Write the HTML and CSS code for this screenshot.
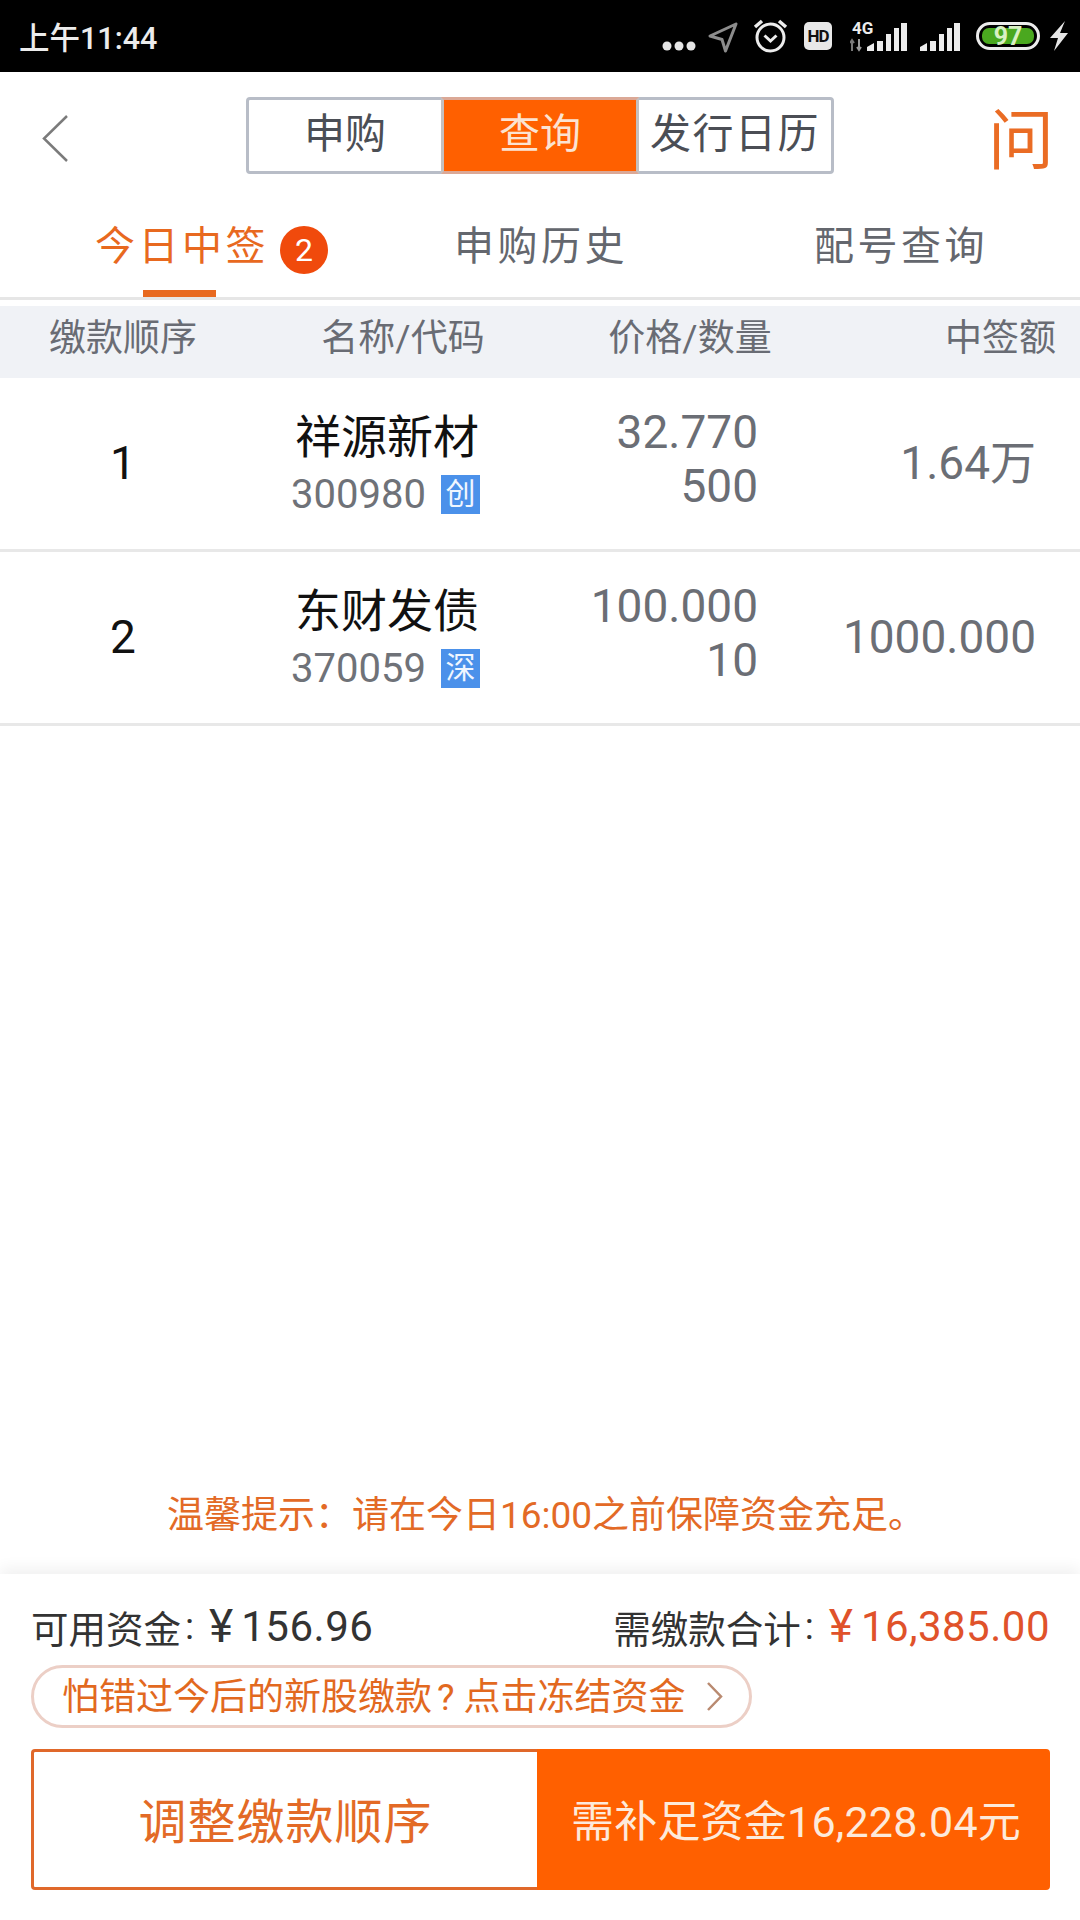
FILE: index.html
```html
<!DOCTYPE html>
<html lang="zh-CN">
<head>
  <meta charset="UTF-8">
  <meta name="viewport" content="width=device-width, initial-scale=1.0">
  <title>今日中签</title>
  <link rel="stylesheet" href="styles.css">
</head>
<body>
  <div class="page">
    <div class="status-bar">
      <span class="time">上午11:44</span>
      <div class="status-icons">
        <svg class="ic-dots" width="34" height="10" viewBox="0 0 34 10"><circle cx="5" cy="5" r="4.5" fill="#e6e6e6"/><circle cx="17" cy="5" r="4.5" fill="#e6e6e6"/><circle cx="29" cy="5" r="4.5" fill="#e6e6e6"/></svg>
        <svg class="ic-loc" width="30" height="31" viewBox="0 0 30 31"><path d="M28 2 L2 14 L14 17.5 L17.5 29 Z" fill="none" stroke="#8c8c8c" stroke-width="3" stroke-linejoin="round"/></svg>
        <svg class="ic-alarm" width="35" height="35" viewBox="0 0 35 35"><circle cx="17.5" cy="19.5" r="13.5" fill="none" stroke="#ececec" stroke-width="3"/><path d="M11.5 17.5 L17.5 23 L23.5 17.5" fill="none" stroke="#ececec" stroke-width="3"/><path d="M2 9 L9 3 M26 3 L33 9" stroke="#ececec" stroke-width="3.5"/></svg>
        <span class="ic-hd">HD</span>
        <svg class="ic-sig-4g" width="57" height="35" viewBox="0 -4 57 35">
          <text class="sig-label" x="2" y="13">4G</text>
          <path d="M2 30 V19 M0 22 L2 19 L4 22" stroke="#777" stroke-width="2" fill="none"/>
          <path d="M9 18 V29 M7 26 L9 29 L11 26" stroke="#999" stroke-width="2" fill="none"/>
          <path d="M17 30 V26 L24 22 V30 Z M27 20 H33 V30 H27 Z M36 13 H41 V30 H36 Z M44 7 H49 V30 H44 Z M51 2 H57 V30 H51 Z" fill="#ececec"/>
        </svg>
        <svg class="ic-sig" width="40" height="29" viewBox="0 0 40 29"><path d="M0 29 V25 L7 21 V29 Z M10 19 H16 V29 H10 Z M19 12 H24 V29 H19 Z M27 6 H32 V29 H27 Z M34 1 H40 V29 H34 Z" fill="#ececec"/></svg>
        <svg class="ic-batt" width="64" height="28" viewBox="0 0 64 28">
          <rect x="1.5" y="1.5" width="61" height="25" rx="12.5" fill="none" stroke="#ececec" stroke-width="3"/>
          <rect x="6" y="6" width="52" height="16" rx="7" fill="#4aa81f"/>
          <text class="batt-label" x="32" y="23" text-anchor="middle">97</text>
        </svg>
        <svg class="ic-bolt" width="18" height="30" viewBox="0 0 18 30"><path d="M15 0 L0 17 L8 17 L4 30 L18 12 L10 12 Z" fill="#e6e6e6"/></svg>
      </div>
    </div>

    <div class="nav">
      <svg class="back" width="28" height="47" viewBox="0 0 28 47"><path d="M25 1 L2 23.5 L25 46" fill="none" stroke="#7b7b7b" stroke-width="2.5"/></svg>
      <div class="segment">
        <div class="seg-item">申购</div>
        <div class="seg-item active">查询</div>
        <div class="seg-item">发行日历</div>
      </div>
      <div class="ask">问</div>
    </div>

    <div class="tabs">
      <div class="tab active">今日中签<span class="tab-badge">2</span></div>
      <div class="tab tab-history">申购历史</div>
      <div class="tab tab-lookup">配号查询</div>
    </div>

    <div class="table-head">
      <div class="th-order">缴款顺序</div>
      <div class="th-name">名称/代码</div>
      <div class="th-price">价格/数量</div>
      <div class="th-amount">中签额</div>
    </div>

    <div class="row">
      <div class="cell-order">1</div>
      <div class="cell-name">
        <div class="stock-name">祥源新材</div>
        <div class="stock-code">300980<span class="market">创</span></div>
      </div>
      <div class="cell-price">32.770<br>500</div>
      <div class="cell-amount">1.64万</div>
    </div>
    <div class="row">
      <div class="cell-order">2</div>
      <div class="cell-name">
        <div class="stock-name">东财发债</div>
        <div class="stock-code">370059<span class="market">深</span></div>
      </div>
      <div class="cell-price">100.000<br>10</div>
      <div class="cell-amount">1000.000</div>
    </div>

    <div class="spacer">
      <div class="tip">温馨提示：请在今日16:00之前保障资金充足。</div>
    </div>

    <div class="footer">
      <div class="funds">
        <div class="funds-item">可用资金<span class="colon">:</span><span class="yen">¥</span><span class="money">156.96</span></div>
        <div class="funds-item due">需缴款合计<span class="colon">:</span><span class="yen">¥</span><span class="money">16,385.00</span></div>
      </div>
      <div class="freeze">
        <span>怕错过今后的新股缴款<span class="qmark">?</span>点击冻结资金</span>
        <svg width="17" height="31" viewBox="0 0 17 31"><path d="M2 2 L15 15.5 L2 29" fill="none" stroke="#b98a70" stroke-width="2.5"/></svg>
      </div>
      <div class="actions">
        <div class="btn btn-order">调整缴款顺序</div>
        <div class="btn btn-pay">需补足资金16,228.04元</div>
      </div>
    </div>
  </div>
</body>
</html>
```
FILE: styles.css
```css
* {
  box-sizing: border-box;
}
body {
  margin: 0;
  background-color: #fff;
  font-family: Roboto, "Noto Sans CJK SC", sans-serif;
}
.page {
  width: 1080px;
  height: 1920px;
  display: flex;
  flex-direction: column;
}

/* status bar */
.status-bar {
  height: 72px;
  background-color: #000;
  display: flex;
  align-items: center;
  padding: 0 12px 0 19px;
  color: #ececec;
  flex-shrink: 0;
}
.time {
  font-size: 30.5px;
  font-weight: 500;
}
.status-icons {
  margin-left: auto;
  display: flex;
  align-items: center;
}
.ic-dots { margin-top: 20px; }
.ic-loc { margin-left: 12px; margin-top: 2px; }
.ic-alarm { margin-left: 15px; margin-top: -1px; }
.ic-hd {
  margin-left: 16px;
  width: 28px;
  height: 28px;
  background-color: #e8e8e8;
  border-radius: 5px;
  color: #111;
  font-size: 17px;
  font-weight: 700;
  line-height: 28px;
  text-align: center;
  letter-spacing: -1px;
}
.ic-sig-4g { margin-left: 18px; margin-top: -4px; }
.ic-sig { margin-left: 13px; }
.ic-batt { margin-left: 16px; }
.ic-bolt { margin-left: 10px; }
.sig-label {
  font-size: 17px;
  font-weight: 700;
  fill: #ececec;
}
.batt-label {
  font-size: 25px;
  font-weight: 700;
  fill: #d9f0c4;
}

/* top nav */
.nav {
  display: flex;
  align-items: center;
  padding: 25px 26px 0 42px;
  flex-shrink: 0;
}
.back {
  margin-top: 5px;
}
.segment {
  margin-left: 176px;
  width: 588px;
  height: 77px;
  display: flex;
  border: 3px solid #b8bdc7;
  border-radius: 4px;
}
.seg-item {
  flex: 1;
  text-align: center;
  font-size: 41px;
  line-height: 68px;
  color: #4b4e55;
}
.seg-item:last-child {
  white-space: nowrap;
  letter-spacing: 1.5px;
}
.seg-item.active {
  margin: -3px 0;
  height: 77px;
  line-height: 68px;
  background-color: #ff6000;
  border: 3px solid #dba896;
  border-left-color: #c4c0c0;
  border-right-color: #c4c0c0;
  color: #fbe3d2;
}
.ask {
  margin-left: auto;
  height: 77px;
  padding-top: 12px;
  font-size: 66px;
  line-height: 65px;
  color: #ea6c24;
}

/* tabs */
.tabs {
  height: 126px;
  padding-left: 95px;
  padding-top: 14px;
  display: flex;
  align-items: center;
  border-bottom: 3px solid #e6e6e6;
  font-size: 40px;
  letter-spacing: 3.5px;
  color: #64676e;
  flex-shrink: 0;
}
.tab {
  display: flex;
  align-items: center;
  position: relative;
  height: 100%;
}
.tab.active {
  color: #e8691f;
}
.tab.active::after {
  content: "";
  position: absolute;
  left: 48px;
  bottom: 0;
  width: 73px;
  height: 7px;
  background-color: #e8691f;
}
.tab-badge {
  width: 48px;
  height: 48px;
  margin-left: 11px;
  margin-top: 14px;
  border-radius: 50%;
  background-color: #f04a0c;
  color: #fff;
  font-size: 32px;
  letter-spacing: 0;
  line-height: 48px;
  text-align: center;
}
.tab-history { margin-left: 126px; }
.tab-lookup { margin-left: 186px; }

/* table */
.table-head {
  margin-top: 6px;
  height: 72px;
  padding-bottom: 14px;
  display: grid;
  grid-template-columns: 246px 314px 260px 1fr;
  align-items: center;
  background-color: #f0f2f6;
  font-size: 37px;
  color: #696c74;
  flex-shrink: 0;
}
.th-order, .th-name, .th-price {
  text-align: center;
}
.th-amount {
  text-align: right;
  padding-right: 24px;
}
.row {
  height: 174px;
  display: grid;
  grid-template-columns: 246px 284px 228px 1fr;
  align-items: center;
  border-bottom: 3px solid #e8e8e8;
  flex-shrink: 0;
}
.cell-order {
  text-align: center;
  padding-bottom: 2px;
  font-size: 46px;
  line-height: 54px;
  color: #111;
}
.cell-name {
  padding-left: 45px;
  padding-top: 4px;
}
.stock-name {
  margin-left: 4px;
  font-size: 46px;
  line-height: 58px;
  color: #111;
}
.stock-code {
  display: flex;
  align-items: center;
  font-size: 40px;
  line-height: 58px;
  color: #6f7278;
}
.market {
  width: 39px;
  height: 39px;
  margin-left: 15px;
  background-color: #4b91ea;
  color: #f0f6ff;
  font-size: 30px;
  line-height: 38px;
  text-align: center;
}
.cell-price {
  text-align: right;
  font-size: 46px;
  line-height: 54px;
  color: #6b6e75;
  padding-bottom: 9px;
}
.cell-amount {
  text-align: right;
  padding-right: 44px;
  padding-bottom: 2px;
  font-size: 46px;
  line-height: 54px;
  color: #6b6e75;
}

/* tip */
.spacer {
  flex: 1;
  display: flex;
  flex-direction: column;
  justify-content: flex-end;
}
.tip {
  padding-bottom: 34px;
  padding-left: 12px;
  text-align: center;
  font-size: 37px;
  line-height: 48px;
  color: #e36a26;
}

/* footer */
.footer {
  padding: 30px 30px 30px 31px;
  background-color: #fff;
  box-shadow: 0 -6px 14px rgba(0,0,0,0.06);
  flex-shrink: 0;
}
.funds {
  display: flex;
  justify-content: space-between;
  height: 44px;
  align-items: center;
  color: #333;
  font-size: 37.5px;
}
.funds-item {
  display: flex;
  align-items: center;
  white-space: nowrap;
}
.colon {
  margin: 0 15px 0 4px;
}
.yen {
  margin-right: 8px;
  font-size: 46px;
  line-height: 44px;
}
.money {
  font-size: 42px;
  letter-spacing: 0.5px;
}
.due .yen, .due .money {
  color: #e0522a;
}
.freeze {
  margin-top: 17px;
  width: 721px;
  height: 63px;
  display: flex;
  align-items: center;
  padding: 0 26px 6px 28px;
  justify-content: space-between;
  border: 3px solid #eccfc6;
  border-radius: 32px;
  font-size: 37px;
  color: #e2691f;
  white-space: nowrap;
}
.freeze svg {
  margin-top: 6px;
}
.qmark {
  margin: 0 9px 0 5px;
}
.actions {
  margin-top: 21px;
  height: 141px;
  display: flex;
}
.btn {
  display: flex;
  align-items: center;
  justify-content: center;
  padding-bottom: 3px;
  white-space: nowrap;
}
.btn-order {
  width: 506px;
  border: 3px solid #e0682a;
  border-right: none;
  border-radius: 4px 0 0 4px;
  font-size: 48px;
  letter-spacing: 1px;
  color: #e36a26;
}
.btn-pay {
  flex: 1;
  padding-left: 5px;
  background-color: #ff6000;
  border-radius: 0 4px 4px 0;
  font-size: 43px;
  letter-spacing: 0.2px;
  color: #fdeadb;
}
```
